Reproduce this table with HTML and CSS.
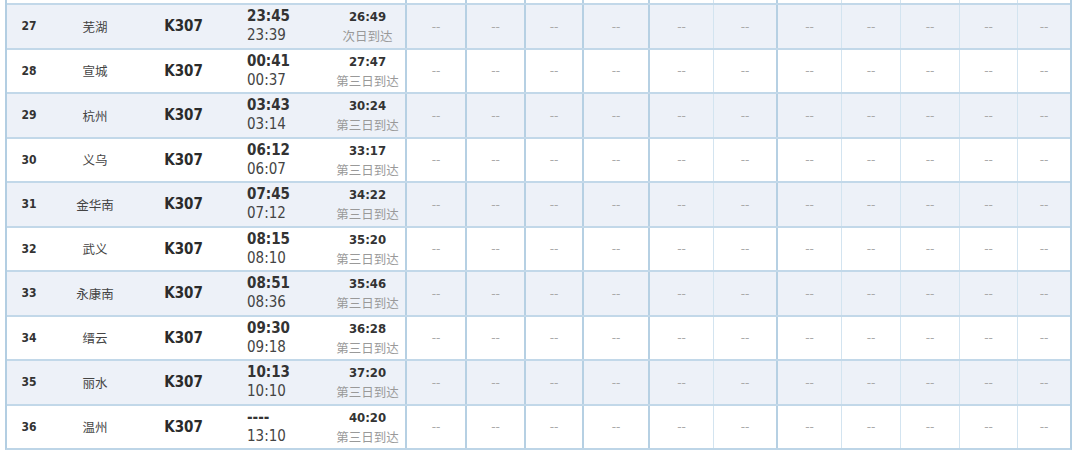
FILE: index.html
```html
<!DOCTYPE html>
<html lang="zh-CN">
<head>
<meta charset="utf-8">
<title>K307 时刻表</title>
<link rel="stylesheet" href="styles.css">
</head>
<body>
<div class="sheet">
  <div class="row cut">
    <div></div><div></div><div></div><div></div><div></div>
    <div class="d"></div><div class="d"></div><div class="d"></div><div class="d"></div><div class="d"></div><div class="d lt"></div><div class="d"></div><div class="d lt"></div><div class="d lt"></div><div class="d lt"></div><div class="d lt"></div>
  </div>
  <div class="row alt">
    <div class="no">27</div><div class="st">芜湖</div><div class="tr">K307</div>
    <div class="tm"><b>23:45</b><span>23:39</span></div>
    <div class="ar"><b>26:49</b><span>次日到达</span></div>
    <div class="d">--</div><div class="d">--</div><div class="d">--</div><div class="d">--</div><div class="d">--</div><div class="d lt">--</div><div class="d">--</div><div class="d lt">--</div><div class="d lt">--</div><div class="d lt">--</div><div class="d lt">--</div>
  </div>
  <div class="row">
    <div class="no">28</div><div class="st">宣城</div><div class="tr">K307</div>
    <div class="tm"><b>00:41</b><span>00:37</span></div>
    <div class="ar"><b>27:47</b><span>第三日到达</span></div>
    <div class="d">--</div><div class="d">--</div><div class="d">--</div><div class="d">--</div><div class="d">--</div><div class="d lt">--</div><div class="d">--</div><div class="d lt">--</div><div class="d lt">--</div><div class="d lt">--</div><div class="d lt">--</div>
  </div>
  <div class="row alt">
    <div class="no">29</div><div class="st">杭州</div><div class="tr">K307</div>
    <div class="tm"><b>03:43</b><span>03:14</span></div>
    <div class="ar"><b>30:24</b><span>第三日到达</span></div>
    <div class="d">--</div><div class="d">--</div><div class="d">--</div><div class="d">--</div><div class="d">--</div><div class="d lt">--</div><div class="d">--</div><div class="d lt">--</div><div class="d lt">--</div><div class="d lt">--</div><div class="d lt">--</div>
  </div>
  <div class="row">
    <div class="no">30</div><div class="st">义乌</div><div class="tr">K307</div>
    <div class="tm"><b>06:12</b><span>06:07</span></div>
    <div class="ar"><b>33:17</b><span>第三日到达</span></div>
    <div class="d">--</div><div class="d">--</div><div class="d">--</div><div class="d">--</div><div class="d">--</div><div class="d lt">--</div><div class="d">--</div><div class="d lt">--</div><div class="d lt">--</div><div class="d lt">--</div><div class="d lt">--</div>
  </div>
  <div class="row alt">
    <div class="no">31</div><div class="st">金华南</div><div class="tr">K307</div>
    <div class="tm"><b>07:45</b><span>07:12</span></div>
    <div class="ar"><b>34:22</b><span>第三日到达</span></div>
    <div class="d">--</div><div class="d">--</div><div class="d">--</div><div class="d">--</div><div class="d">--</div><div class="d lt">--</div><div class="d">--</div><div class="d lt">--</div><div class="d lt">--</div><div class="d lt">--</div><div class="d lt">--</div>
  </div>
  <div class="row">
    <div class="no">32</div><div class="st">武义</div><div class="tr">K307</div>
    <div class="tm"><b>08:15</b><span>08:10</span></div>
    <div class="ar"><b>35:20</b><span>第三日到达</span></div>
    <div class="d">--</div><div class="d">--</div><div class="d">--</div><div class="d">--</div><div class="d">--</div><div class="d lt">--</div><div class="d">--</div><div class="d lt">--</div><div class="d lt">--</div><div class="d lt">--</div><div class="d lt">--</div>
  </div>
  <div class="row alt">
    <div class="no">33</div><div class="st">永康南</div><div class="tr">K307</div>
    <div class="tm"><b>08:51</b><span>08:36</span></div>
    <div class="ar"><b>35:46</b><span>第三日到达</span></div>
    <div class="d">--</div><div class="d">--</div><div class="d">--</div><div class="d">--</div><div class="d">--</div><div class="d lt">--</div><div class="d">--</div><div class="d lt">--</div><div class="d lt">--</div><div class="d lt">--</div><div class="d lt">--</div>
  </div>
  <div class="row">
    <div class="no">34</div><div class="st">缙云</div><div class="tr">K307</div>
    <div class="tm"><b>09:30</b><span>09:18</span></div>
    <div class="ar"><b>36:28</b><span>第三日到达</span></div>
    <div class="d">--</div><div class="d">--</div><div class="d">--</div><div class="d">--</div><div class="d">--</div><div class="d lt">--</div><div class="d">--</div><div class="d lt">--</div><div class="d lt">--</div><div class="d lt">--</div><div class="d lt">--</div>
  </div>
  <div class="row alt">
    <div class="no">35</div><div class="st">丽水</div><div class="tr">K307</div>
    <div class="tm"><b>10:13</b><span>10:10</span></div>
    <div class="ar"><b>37:20</b><span>第三日到达</span></div>
    <div class="d">--</div><div class="d">--</div><div class="d">--</div><div class="d">--</div><div class="d">--</div><div class="d lt">--</div><div class="d">--</div><div class="d lt">--</div><div class="d lt">--</div><div class="d lt">--</div><div class="d lt">--</div>
  </div>
  <div class="row">
    <div class="no">36</div><div class="st">温州</div><div class="tr">K307</div>
    <div class="tm"><b>----</b><span>13:10</span></div>
    <div class="ar"><b>40:20</b><span>第三日到达</span></div>
    <div class="d">--</div><div class="d">--</div><div class="d">--</div><div class="d">--</div><div class="d">--</div><div class="d lt">--</div><div class="d">--</div><div class="d lt">--</div><div class="d lt">--</div><div class="d lt">--</div><div class="d lt">--</div>
  </div>
</div>
</body>
</html>
```

FILE: styles.css
```css
html, body {
  margin: 0;
  padding: 0;
  background: #ffffff;
}

.sheet {
  margin-left: 5px;
  width: 1067px;
  box-sizing: border-box;
  border-left: 2px solid #b3cee2;
  border-right: 2px solid #b3cee2;
  border-bottom: 2px solid #bdd5e7;
  font-family: "DejaVu Sans", sans-serif;
  font-stretch: condensed;
  color: #333;
}

.row {
  display: grid;
  grid-template-columns: 44px 88px 89px 102px 75px 60px 59px 58px 66px 65px 63px 65px 59px 59px 58px 53px;
  height: 44.5px;
  box-sizing: border-box;
  border-top: 2px solid #c2d8e9;
  background: #ffffff;
}

.row.cut {
  height: 3px;
  border-top: 0;
}

.row.alt {
  background: #edf1f8;
}

.row > div {
  display: flex;
  flex-direction: column;
  justify-content: center;
  align-items: center;
  min-width: 0;
}

.no {
  font-size: 12px;
  font-weight: bold;
  color: #333;
}

.st {
  font-family: "Noto Sans CJK SC", sans-serif;
  font-size: 12.5px;
  color: #444;
}

.tr {
  font-size: 15px;
  font-weight: bold;
  color: #2b2b2b;
}

.row > .tm {
  align-items: flex-start;
  padding-left: 19px;
  font-size: 15px;
  line-height: 19px;
}

.tm b {
  font-weight: bold;
  color: #333;
}

.tm span {
  color: #444;
}

.ar {
  line-height: 19px;
}

.ar b {
  font-size: 13px;
  font-weight: bold;
  color: #333;
}

.ar span {
  font-family: "Noto Sans CJK SC", sans-serif;
  font-size: 12.5px;
  color: #999;
}

.row > .d {
  box-sizing: border-box;
  border-left: 2px solid #b6d0e3;
  font-size: 12px;
  font-stretch: normal;
  color: #aaa;
  padding-top: 1px;
}

.row > .d.lt {
  border-left: 1px solid #d3e4f0;
}
```
